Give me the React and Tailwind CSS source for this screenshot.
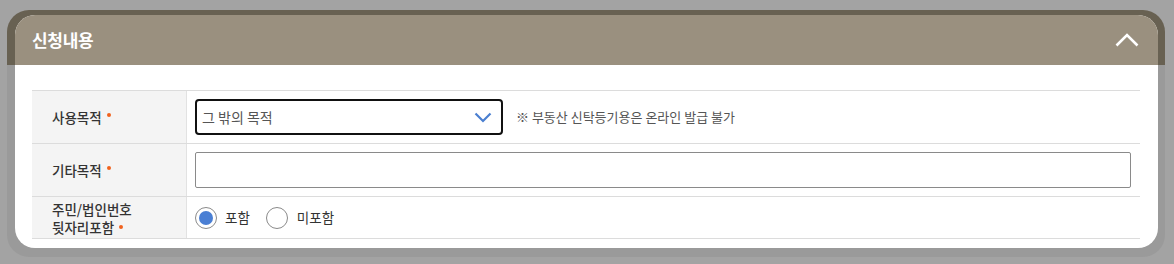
import React from "react";

const font = { fontFamily: '"Noto Sans CJK KR", "Noto Sans", sans-serif' };

function Dot() {
  return <span className="ml-[5px] inline-block h-[4px] w-[4px] rounded-full bg-[#f0621e] align-middle relative top-[-2px]" />;
}

export default function App() {
  return (
    <div className="h-[264px] w-full bg-[#a3a3a3] pt-[10px] pl-[7px]" style={font}>
      <div className="h-[247px] w-[1158px] rounded-[22px] bg-[linear-gradient(#686152_55px,#9a9a9a_55px)] pt-[5px] pl-[8px] pr-[7px]">
        <div className="h-[233px] w-[1143px] overflow-hidden rounded-[20px] bg-white">
          <div className="flex h-[50px] items-center justify-between bg-[#9a907f] pl-[17px] pr-[19px]">
            <span className="text-[17px] font-semibold text-white tracking-[-0.3px]">신청내용</span>
            <svg width="24" height="14" viewBox="0 0 24 14" fill="none">
              <path d="M1.5 12.5 L12 2 L22.5 12.5" stroke="white" strokeWidth="2.6" />
            </svg>
          </div>
          <div className="pt-[25px] pl-[17px] pr-[18px]">
            <div className="border-t border-b border-[#dcdcdc] text-[14px]">
              <div className="flex h-[53px] border-b border-[#dcdcdc]">
                <div className="flex w-[155px] items-center bg-[#f4f4f4] pl-[20px] text-[13.5px] font-medium text-[#333] border-r border-[#e2e2e2]">
                  사용목적<Dot />
                </div>
                <div className="flex items-center pl-[8px]">
                  <div className="flex h-[36px] w-[308px] items-center justify-between rounded-[4px] border-2 border-[#111] pl-[5px] pr-[9px] text-[#555]">
                    <span className="text-[14px]">그 밖의 목적</span>
                    <svg width="18" height="11" viewBox="0 0 18 11" fill="none">
                      <path d="M1.5 1.5 L9 9 L16.5 1.5" stroke="#4a7fd0" strokeWidth="2.2" />
                    </svg>
                  </div>
                  <span className="ml-[13px] text-[13px] text-[#555]">※ 부동산 신탁등기용은 온라인 발급 불가</span>
                </div>
              </div>
              <div className="flex h-[53px] border-b border-[#dcdcdc]">
                <div className="flex w-[155px] items-center bg-[#f4f4f4] pl-[20px] text-[13.5px] font-medium text-[#333] border-r border-[#e2e2e2]">
                  기타목적<Dot />
                </div>
                <div className="flex flex-1 items-center pl-[8px] pr-[9px]">
                  <div className="h-[36px] w-full rounded-[2px] border border-[#8a8a8a]" />
                </div>
              </div>
              <div className="flex h-[41px]">
                <div className="flex w-[155px] flex-col justify-center bg-[#f4f4f4] pl-[20px] text-[13.5px] font-medium leading-[18px] text-[#333] border-r border-[#e2e2e2]">
                  <span>주민/법인번호</span>
                  <span>뒷자리포함<Dot /></span>
                </div>
                <div className="flex items-center pl-[8px] text-[13.5px] text-[#333]">
                  <span className="flex h-[22px] w-[22px] items-center justify-center rounded-full border border-[#8a8a8a]">
                    <span className="h-[14px] w-[14px] rounded-full bg-[#4a7fd4]" />
                  </span>
                  <span className="ml-[8px]">포함</span>
                  <span className="ml-[16px] h-[22px] w-[22px] rounded-full border border-[#8a8a8a]" />
                  <span className="ml-[9px]">미포함</span>
                </div>
              </div>
            </div>
          </div>
        </div>
      </div>
    </div>
  );
}
